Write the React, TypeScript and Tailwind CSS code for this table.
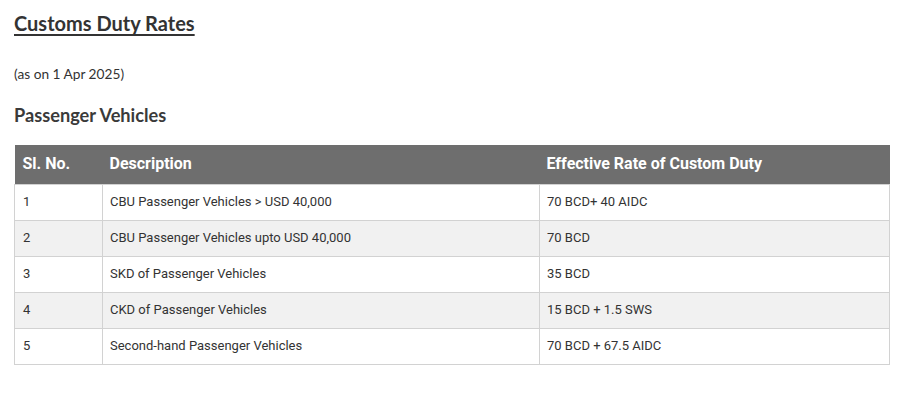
import React from "react";

const rows = [
  ["1", "CBU Passenger Vehicles > USD 40,000", "70 BCD+ 40 AIDC"],
  ["2", "CBU Passenger Vehicles upto USD 40,000", "70 BCD"],
  ["3", "SKD of Passenger Vehicles", "35 BCD"],
  ["4", "CKD of Passenger Vehicles", "15 BCD + 1.5 SWS"],
  ["5", "Second-hand Passenger Vehicles", "70 BCD + 67.5 AIDC"],
];

export default function App() {
  return (
    <div className="w-[907px] h-[399px] bg-white px-[14px] pt-[9px] font-['Lato',sans-serif] text-[#333]">
      <h2 className="text-[20px] font-bold leading-[28px] underline decoration-[1.5px] underline-offset-[3px]">
        Customs Duty Rates
      </h2>
      <p className="mt-[28px] text-[13.7px] leading-[18px]">(as on 1 Apr 2025)</p>
      <h3 className="mt-[20px] text-[18.2px] font-bold leading-[24px] text-[#3a3a3a]">Passenger Vehicles</h3>
      <table className="mt-[18px] w-[876px] border-collapse font-['Roboto',sans-serif] text-[13px] text-[#333]">
        <thead>
          <tr className="h-[39px] bg-[#6e6e6e] text-left text-[16px] font-bold text-white">
            <th className="w-[88px] px-2">Sl. No.</th>
            <th className="w-[437px] px-[7px]">Description</th>
            <th className="px-[7px]">Effective Rate of Custom Duty</th>
          </tr>
        </thead>
        <tbody>
          {rows.map((r, i) => (
            <tr key={r[0]} className={i % 2 === 1 ? "h-[36px] bg-[#f1f1f1]" : "h-[36px] bg-white"}>
              <td className="border border-[#d2d2d2] px-2">{r[0]}</td>
              <td className="border border-[#d2d2d2] px-[7px]">{r[1]}</td>
              <td className="border border-[#d2d2d2] px-[7px]">{r[2]}</td>
            </tr>
          ))}
        </tbody>
      </table>
    </div>
  );
}
